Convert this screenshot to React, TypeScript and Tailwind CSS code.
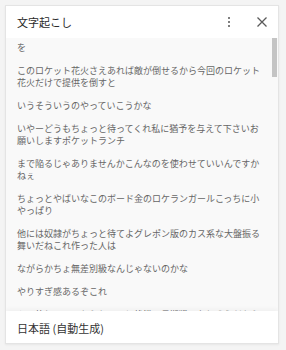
const lines = [
  "を",
  "このロケット花火さえあれば敵が倒せるから今回のロケット花火だけで提供を倒すと",
  "いうそういうのやっていこうかな",
  "いやーどうもちょっと待ってくれ私に猶予を与えて下さいお願いしますポケットランチ",
  "まで陥るじゃありませんかこんなのを使わせていいんですかねぇ",
  "ちょっとやばいなこのボード金のロケランガールこっちに小やっぱり",
  "他には奴隷がちょっと待てよグレポン版のカス系な大盤振る舞いだねこれ作った人は",
  "ながらかちょ無差別級なんじゃないのかな",
  "やりすぎ感あるぞこれ",
  "ぶっ放していくからちょっと状態の長期戦になりそうだからね",
]

export default function App() {
  return (
    <div
      className="w-[286px] h-[350px] bg-[#f4f4f4] p-[5px]"
      style={{ fontFamily: '"Noto Sans CJK JP", "Noto Sans", sans-serif' }}
    >
      <div className="w-[274px] h-[339px] flex flex-col bg-white border border-[#e4e4e4] shadow-[0_1px_2px_rgba(0,0,0,0.06)] overflow-hidden">
        {/* ヘッダー */}
        <div className="h-[32px] shrink-0 flex items-center pl-[11px] pr-[10px] bg-white">
          <span className="text-[11px] leading-none text-[#2a2a2a]">文字起こし</span>
          <div className="ml-auto flex items-center gap-[26px]">
            <div className="flex flex-col items-center gap-[2px]">
              <span className="w-[2px] h-[2px] rounded-full bg-[#555]" />
              <span className="w-[2px] h-[2px] rounded-full bg-[#555]" />
              <span className="w-[2px] h-[2px] rounded-full bg-[#555]" />
            </div>
            <svg width="12" height="12" viewBox="0 0 12 12">
              <path d="M1.5 1.5 L10.5 10.5 M10.5 1.5 L1.5 10.5" stroke="#5a5a5a" strokeWidth="1.3" />
            </svg>
          </div>
        </div>

        {/* 本文 */}
        <div className="relative flex-1 overflow-hidden bg-[#f9f9f9]">
          <div className="pl-[11px] pr-[13px] pt-[4px] flex flex-col gap-[11px]">
            {lines.map((t, i) => (
              <p key={i} className="text-[9px] leading-[12px] text-[#666]">
                {t}
              </p>
            ))}
          </div>
          {/* スクロールバー */}
          <div className="absolute right-[1px] top-0 w-[5px] h-[39px] bg-[#c4c4c4]" />
        </div>

        {/* フッター */}
        <div className="h-[32px] shrink-0 flex items-center pl-[11px] pt-[3px] bg-white shadow-[0_-2px_4px_rgba(0,0,0,0.04)] relative">
          <span className="text-[11px] leading-none text-[#333]">日本語 (自動生成)</span>
        </div>
      </div>
    </div>
  )
}
